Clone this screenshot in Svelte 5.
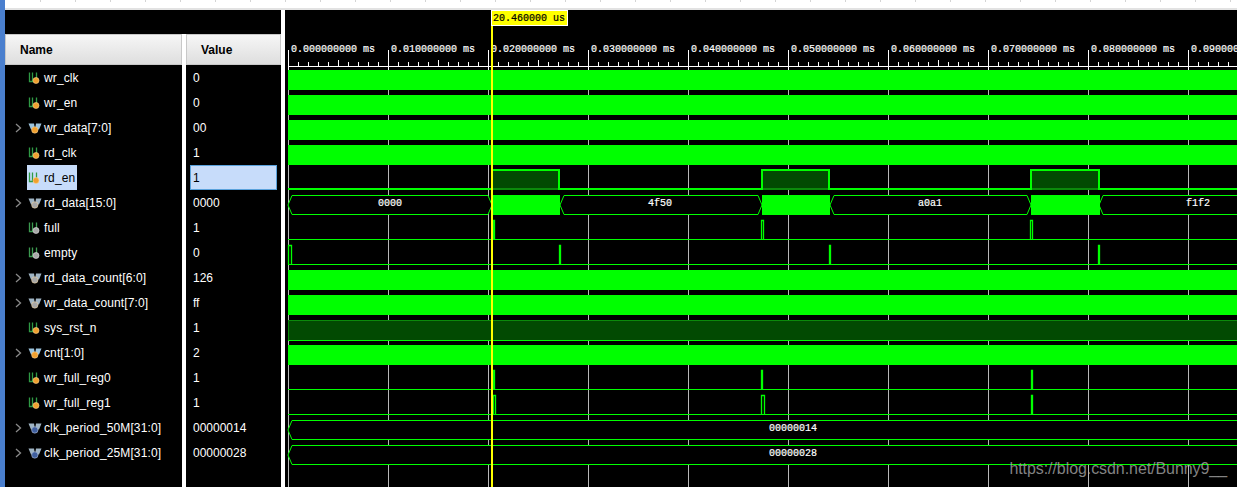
<script>
  const rows = [
    { n: 'wr_clk', v: '0', k: 'scalar', c: 'o' },
    { n: 'wr_en', v: '0', k: 'scalar', c: 'o' },
    { n: 'wr_data[7:0]', v: '00', k: 'bus', c: 'o' },
    { n: 'rd_clk', v: '1', k: 'scalar', c: 'o' },
    { n: 'rd_en', v: '1', k: 'scalar', c: 'o', sel: true },
    { n: 'rd_data[15:0]', v: '0000', k: 'bus', c: 'g' },
    { n: 'full', v: '1', k: 'scalar', c: 'g' },
    { n: 'empty', v: '0', k: 'scalar', c: 'g' },
    { n: 'rd_data_count[6:0]', v: '126', k: 'bus', c: 'g' },
    { n: 'wr_data_count[7:0]', v: 'ff', k: 'bus', c: 'g' },
    { n: 'sys_rst_n', v: '1', k: 'scalar', c: 'o' },
    { n: 'cnt[1:0]', v: '2', k: 'bus', c: 'o' },
    { n: 'wr_full_reg0', v: '1', k: 'scalar', c: 'o' },
    { n: 'wr_full_reg1', v: '1', k: 'scalar', c: 'o' },
    { n: 'clk_period_50M[31:0]', v: '00000014', k: 'bus', c: 'c' },
    { n: 'clk_period_25M[31:0]', v: '00000028', k: 'bus', c: 'c' }
  ];
  const dot = { o: '#f0a030', g: '#a8a8a8', c: '#3f5f9f' };
  const topTicks = Array.from({ length: 36 }, (_, i) => 39.5 + i * 35);
  const majors = Array.from({ length: 10 }, (_, i) => 288.5 + i * 100);
  const minors = Array.from({ length: 95 }, (_, i) => 288.5 + i * 10).filter((_, i) => i % 10 !== 0);
  const labels = majors.map((x, i) => ({ x: x + 2.5, t: `0.0${i}0000000 ms` }));
  const bands = [0, 1, 2, 3, 8, 9, 11].map((i) => 70 + i * 25);
  const hex = (a, b, t, h = 19, c = 4) =>
    `M${a} ${t + h / 2}L${a + c} ${t}H${b - c}L${b} ${t + h / 2}L${b - c} ${t + h}H${a + c}Z`;
  const pulses = [
    [492, 559],
    [762, 829],
    [1031, 1099]
  ];
  const gaps = [
    [288, 492],
    [560, 762],
    [830, 1031],
    [1099, 1250]
  ];
  const dataLabels = [
    [390, '0000'],
    [660, '4f50'],
    [930, 'a0a1'],
    [1198, 'f1f2']
  ];
  const spikes = [
    { base: 239.5, top: 220.5, xs: [[493.5, 494.5], [761.5, 763.5], [1030.5, 1032.5]] },
    { base: 264.5, top: 245.5, xs: [[288.5, 291.5], [559.5, 560.5], [829.5, 830.5], [1098.5, 1099.5]] },
    { base: 389.5, top: 370.5, xs: [[493.5, 494.5], [761.5, 762.5], [1031.5, 1032.5]] },
    { base: 414.5, top: 395.5, xs: [[493.5, 495.5], [761.5, 764.5], [1031.5, 1032.5]] }
  ];
</script>

<div class="app">
  <div class="topstrip">
    {#each topTicks as t}<i class="toptick" style="left:{t}px"></i>{/each}
  </div>
  <div class="main">
    <div class="left">
      <div class="blackhead"></div>
      <div class="cols">
        <div class="col names">
          <div class="head">Name</div>
          {#each rows as r}
            <div class="row">
              <span class="chev">
                {#if r.k === 'bus'}
                  <svg width="7" height="10" viewBox="0 0 7 10"><path d="M1 1l4.500 4-4.500 4" fill="none" stroke="#8a8a8a" stroke-width="1.300" /></svg>
                {/if}
              </span>
              <span class="cell" class:sel={r.sel}>
                <svg class="ico" width="14" height="14" viewBox="0 0 14 14">
                  {#if r.k === 'scalar'}
                    <path d="M1.500 1.500v9h3v-9M8.500 1.500v6" fill="none" stroke={r.c === 'g' ? '#3c9a50' : '#2f9a45'} stroke-width="1.300" />
                    <circle cx="8" cy="9.500" r="3" fill={dot[r.c]} stroke={r.c === 'g' ? '#e8e8e8' : '#ffd890'} stroke-width=".6" />
                  {:else}
                    <path d="M0.500 2.500h5.500l1 6h-4zM7 8.500l1-6h5.500l-2.500 6z" fill={r.c === 'o' ? '#9cc4de' : '#9fb4c4'} />
                    <circle cx="6.800" cy="9" r="3.200" fill={dot[r.c]} stroke={r.c === 'c' ? '#c8d4e8' : '#f8d8a0'} stroke-width=".5" />
                  {/if}
                </svg>
                <span class="label">{r.n}</span>
              </span>
            </div>
          {/each}
        </div>
        <div class="col values">
          <div class="head">Value</div>
          {#each rows as r}
            <div class="row vrow">
              <span class="val" class:vsel={r.sel}>{r.v}</span>
            </div>
          {/each}
        </div>
      </div>
    </div>
    <div class="wave">
      <svg width="952" height="477" viewBox="285 10 952 477">
        {#each majors as x}
          <line x1={x} x2={x} y1="50" y2="70" stroke="#fff" />
          <line x1={x} x2={x} y1="70" y2="487" stroke="#b8b8b8" />
        {/each}
        <line x1="288" x2="1237" y1="66.500" y2="66.500" stroke="#fff" />
        {#each minors as x}
          <line x1={x} x2={x} y1="62" y2="66" stroke="#fff" />
        {/each}
        {#each majors as x}
          <line x1={x + 50} x2={x + 50} y1="60" y2="66" stroke="#fff" />
        {/each}
        {#each labels as l}
          <text class="rul" x={l.x} y="52">{l.t}</text>
        {/each}

        {#each bands as y}
          <rect x="288" {y} width="949" height="20" fill="#0f0" />
        {/each}

        <path d="M288 189H492V170H559V189H762V170H829V189H1031V170H1099V189H1237" fill="none" stroke="#0f0" stroke-width="2" />
        {#each pulses as p}
          <rect x={p[0] + 1} y="171" width={p[1] - p[0] - 2} height="17" fill="#024a02" />
          <rect x={p[0] + 1} y="188" width={p[1] - p[0] - 2} height="2" fill="#0b8a0b" />
        {/each}

        {#each gaps as g}
          <path d={hex(g[0], g[1], 195.500)} fill="#000" stroke="#0f0" />
        {/each}
        {#each pulses as p}
          <rect x={p[0]} y="195" width={p[1] - p[0] + 1} height="20" fill="#0f0" />
        {/each}
        {#each dataLabels as d}
          <text class="dat" x={d[0]} y="206" text-anchor="middle">{d[1]}</text>
        {/each}

        {#each spikes as s}
          <line x1="288" x2="1237" y1={s.base} y2={s.base} stroke="#0f0" />
          {#each s.xs as x}
            <path d="M{x[0]} {s.base}V{s.top}H{x[1]}V{s.base}" fill="none" stroke="#0f0" stroke-width="1.300" />
          {/each}
        {/each}

        <rect x="288" y="320.500" width="949" height="19.500" fill="#024a02" />
        <path d="M288.500 340V320.500H1237" fill="none" stroke="#0b8a0b" />
        <line x1="288" x2="1237" y1="340.500" y2="340.500" stroke="#0f0" />

        <path d={hex(288, 1250, 420.500)} fill="#000" stroke="#0f0" />
        <path d={hex(288, 1250, 445.500)} fill="#000" stroke="#0f0" />
        <text class="dat" x="793" y="431" text-anchor="middle">00000014</text>
        <text class="dat" x="793" y="456" text-anchor="middle">00000028</text>

        <rect x="491" y="24" width="2" height="463" fill="#ff0" />
        <rect x="491.500" y="10.500" width="76" height="15" fill="#ff0" stroke="#fff" />
        <text class="cur" x="493" y="21">20.460000 us</text>
      </svg>
      <span class="mark">https://blog.csdn.net/Bunny9__</span>
    </div>
  </div>
</div>

<style>
  :global(body) {
    margin: 0;
    background: #fff;
  }
  .app {
    width: 1237px;
    height: 487px;
    overflow: hidden;
    display: flex;
    flex-direction: column;
    background: #fff;
    font-family: 'Liberation Sans', Arial, sans-serif;
    font-size: 12px;
    box-sizing: border-box;
  }
  .topstrip {
    position: relative;
    height: 8px;
    border-bottom: 2px solid #e2e2e2;
    flex: none;
    margin-left: 5px;
  }
  .toptick {
    position: absolute;
    top: 0;
    width: 1px;
    height: 2px;
    margin-left: -5px;
    background: #d4d4d4;
  }
  .main {
    display: flex;
    flex: 1;
    min-height: 0;
    gap: 4px;
    position: relative;
  }
  .main::before {
    content: '';
    position: absolute;
    left: 0;
    top: -10px;
    bottom: 0;
    width: 5px;
    background: #4a7fce;
  }
  .left {
    width: 276px;
    margin-left: 5px;
    display: flex;
    flex-direction: column;
  }
  .blackhead {
    height: 24px;
    background: #000;
    flex: none;
  }
  .cols {
    display: flex;
    gap: 4px;
    flex: 1;
  }
  .col {
    background: #000;
    color: #fff;
  }
  .names {
    width: 177px;
  }
  .values {
    width: 95px;
  }
  .head {
    height: 31px;
    box-sizing: border-box;
    border: 1px solid #c8c8c8;
    background: linear-gradient(#f6f6f6, #dedede);
    color: #000;
    font-weight: 700;
    line-height: 31px;
    padding-left: 14px;
  }
  .row {
    height: 25px;
    display: flex;
    align-items: center;
    white-space: nowrap;
  }
  .chev {
    width: 22px;
    padding-left: 10px;
    box-sizing: border-box;
    display: flex;
    align-items: center;
  }
  .cell {
    height: 25px;
    display: flex;
    align-items: center;
    gap: 2px;
    padding-right: 2px;
  }
  .cell.sel {
    background: #c7dcfa;
    color: #000;
  }
  .label {
    letter-spacing: 0.01em;
  }
  .ico {
    flex: none;
    margin-left: 1px;
  }
  .vrow {
    padding-left: 4px;
  }
  .val {
    display: block;
    width: 87px;
    height: 25px;
    line-height: 25px;
    box-sizing: border-box;
    border: 1px solid transparent;
    padding-left: 2px;
  }
  .val.vsel {
    background: #c7dcfa;
    border-color: #5aa2dc;
    color: #000;
  }
  .wave {
    flex: 1;
    position: relative;
    background: #000;
    min-width: 0;
  }
  .wave svg {
    display: block;
    opacity: 0.999;
  }
  .rul,
  .dat,
  .cur {
    font-family: 'Liberation Mono', 'DejaVu Sans Mono', monospace;
    font-size: 10px;
  }
  .rul,
  .dat {
    fill: #fff;
    stroke: #fff;
    stroke-width: 0.2px;
  }
  .cur {
    fill: #000;
    stroke: #000;
    stroke-width: 0.2px;
  }
  .mark {
    position: absolute;
    right: 10px;
    bottom: 9px;
    font-size: 16px;
    letter-spacing: -0.07px;
    color: rgba(175, 175, 175, 0.75);
    white-space: nowrap;
  }
</style>
